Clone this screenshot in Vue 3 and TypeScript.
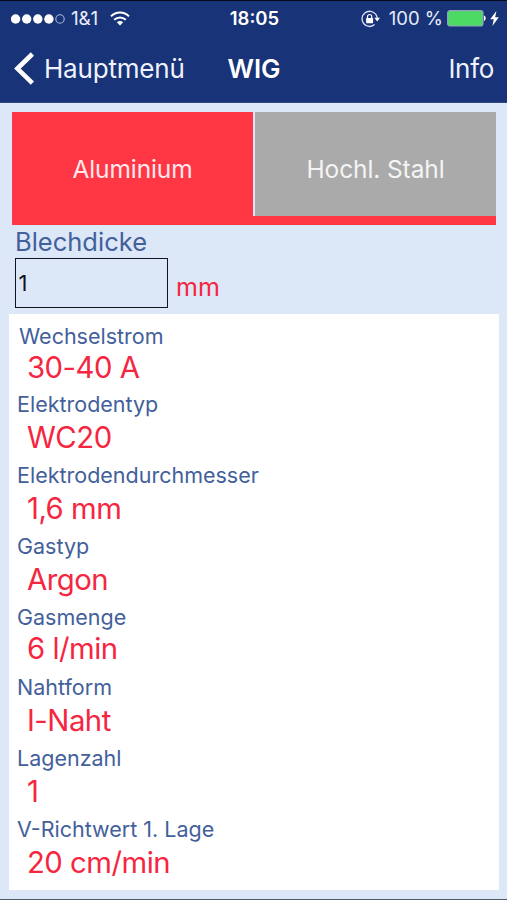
<script setup lang="ts">
import { ref } from 'vue'

interface Reading {
  label: string
  value: string
  compact?: boolean
}

const materials: string[] = ['Aluminium', 'Hochl. Stahl']
const selected = ref(0)
const thickness = ref('1')

const readings: Reading[] = [
  { label: 'Wechselstrom', value: '30-40 A', compact: true },
  { label: 'Elektrodentyp', value: 'WC20' },
  { label: 'Elektrodendurchmesser', value: '1,6 mm' },
  { label: 'Gastyp', value: 'Argon' },
  { label: 'Gasmenge', value: '6 l/min', compact: true },
  { label: 'Nahtform', value: 'I-Naht' },
  { label: 'Lagenzahl', value: '1' },
  { label: 'V-Richtwert 1. Lage', value: '20 cm/min' },
]
</script>

<template>
  <div class="screen">
    <header class="top">
      <div class="status">
        <div class="status-left">
          <svg class="signal" width="56" height="12" viewBox="0 0 56 12">
            <circle v-for="n in 4" :key="n" :cx="4.6 + (n - 1) * 11.1" cy="6" r="4.7" fill="#fff" />
            <circle cx="49" cy="6" r="4.2" fill="none" stroke="#a9b7dc" stroke-width="1.1" />
          </svg>
          <span class="carrier">1&amp;1</span>
          <svg class="wifi" width="20" height="16" viewBox="0 0 20 16" fill="none" stroke="#fff" stroke-width="2">
            <path d="M1 5.4C6 .3 14 .3 19 5.4" />
            <path d="M4.2 8.8C7.6 5.6 12.4 5.6 15.8 8.8" />
            <path d="M10 14.6L6.8 11.3C8.6 9.7 11.4 9.7 13.2 11.3Z" fill="#fff" stroke="none" />
          </svg>
        </div>
        <span class="clock">18:05</span>
        <div class="status-right">
          <svg class="lock" width="19" height="18" viewBox="0 0 19 18">
            <path d="M14.6 4.2A7.6 7.6 0 1 0 13.6 14.6" fill="none" stroke="#dfe6f8" stroke-width="1.3" />
            <path d="M14.6 4.2A7.6 7.6 0 0 1 16.2 8" fill="none" stroke="#dfe6f8" stroke-width="1.3" />
            <path d="M13.4 7.8H19L16.2 11.4Z" fill="#fff" />
            <rect x="5.1" y="8" width="7" height="5.2" rx=".6" fill="#fff" />
            <path d="M6.5 8.4V6.6A2.1 2.1 0 0 1 10.7 6.6V8.4" fill="none" stroke="#fff" stroke-width="1.2" />
          </svg>
          <span class="percent">100 %</span>
          <svg class="battery" width="39" height="17" viewBox="0 0 39 17">
            <rect x=".6" y=".6" width="35.4" height="15.4" rx="2.5" fill="#4cd964" stroke="#8fa5b9" stroke-width="1.2" />
            <path d="M37 5.6C39.2 6.2 39.2 10.4 37 11Z" fill="#fff" />
          </svg>
          <svg class="bolt" width="9" height="15" viewBox="0 0 9 15">
            <path d="M6.4 0L.2 8.2H3.8L2.4 15L8.8 6.2H5.2Z" fill="#fff" />
          </svg>
        </div>
      </div>
      <nav class="nav">
        <button class="back">
          <svg width="21" height="34" viewBox="0 0 21 34" fill="none" stroke="#fff" stroke-width="4.6">
            <path d="M18.4 2L3.4 16.6L18.4 31.2" />
          </svg>
          <span class="back-text">Hauptmenü</span>
        </button>
        <h1 class="title">WIG</h1>
        <button class="info">Info</button>
      </nav>
    </header>

    <div class="tabs">
      <button
        v-for="(name, i) in materials"
        :key="name"
        class="tab"
        :class="{ active: i === selected }"
        @click="selected = i"
      >
        {{ name }}
      </button>
    </div>

    <section class="form">
      <label class="form-label" for="thickness">Blechdicke</label>
      <div class="field">
        <input id="thickness" v-model="thickness" class="input" type="text" />
        <span class="unit">mm</span>
      </div>
    </section>

    <dl class="card">
      <div v-for="r in readings" :key="r.label" class="reading" :class="{ compact: r.compact }">
        <dt>{{ r.label }}</dt>
        <dd>{{ r.value }}</dd>
      </div>
    </dl>
  </div>
</template>

<style>
body {
  background: #dce7f7;
}
</style>

<style scoped>
.screen {
  box-sizing: border-box;
  width: 507px;
  height: 900px;
  overflow: hidden;
  display: flex;
  flex-direction: column;
  background: #dce7f7;
  border-bottom: 1px solid #4d5968;
  font-family: Inter, "Liberation Sans", sans-serif;
}
button {
  border: 0;
  margin: 0;
  padding: 0;
  background: none;
  font-family: inherit;
  color: inherit;
}
svg {
  display: block;
  flex: none;
}
.top {
  box-sizing: border-box;
  flex: none;
  height: 103px;
  background: #183377;
  border-top: 1px solid #050b1c;
  border-bottom: 1px solid #33477f;
  color: #fff;
}
.status {
  display: grid;
  grid-template-columns: 1fr auto 1fr;
  align-items: center;
  height: 34px;
  padding: 0 8px 0 11px;
  font-size: 18px;
  line-height: 35px;
  white-space: nowrap;
}
.status-left,
.status-right {
  display: flex;
  align-items: center;
}
.status-right {
  justify-content: flex-end;
}
.carrier {
  margin-left: 4px;
  width: 30px;
  font-size: 19px;
  letter-spacing: -0.2px;
  color: #e6ecfa;
}
.wifi {
  margin-left: 9px;
}
.clock {
  padding-right: 1px;
  font-size: 18.5px;
  font-weight: 600;
}
.percent {
  margin: 0 4px 0 9px;
  font-size: 18.5px;
  color: #e6ecfa;
}
.bolt {
  margin-left: 4px;
}
.nav {
  display: grid;
  grid-template-columns: 1fr auto 1fr;
  align-items: center;
  height: 67px;
  padding: 0 13px 0 14px;
  line-height: 67px;
}
.back {
  display: flex;
  align-items: center;
  gap: 9px;
  font-size: 26px;
}
.back-text {
  letter-spacing: -0.2px;
}
.back-text,
.info {
  color: #eef2fc;
}
.title {
  margin: 0;
  font-size: 26px;
  font-weight: 600;
}
.info {
  justify-self: end;
  font-size: 26px;
  letter-spacing: -0.3px;
}
.tabs {
  flex: none;
  display: flex;
  gap: 2px;
  height: 104px;
  margin: 9px 11px 0 12px;
  border-bottom: 9px solid #ff3745;
}
.tab {
  flex: 1;
  padding-top: 10px;
  background: #aaa;
  color: #f4f4f4;
  font-size: 24.5px;
  letter-spacing: -0.1px;
}
.tab.active {
  background: #ff3745;
  color: #ffe9ee;
}
.form {
  flex: none;
  height: 89px;
  padding-left: 15px;
}
.form-label {
  display: block;
  height: 33px;
  line-height: 33px;
  font-size: 25.5px;
  color: #43609b;
}
.field {
  display: flex;
  gap: 8px;
}
.input {
  box-sizing: border-box;
  width: 153px;
  height: 50px;
  padding: 0 2.5px;
  border: 1.5px solid #10151d;
  border-radius: 0;
  outline: 0;
  background: transparent;
  font: 22px/48px Inter, "Liberation Sans", sans-serif;
  color: #10151d;
}
.unit {
  font-size: 25px;
  line-height: 58px;
  color: #f52640;
}
.card {
  flex: none;
  box-sizing: border-box;
  display: grid;
  grid-template-rows: 68px repeat(3, 71px) 70px 71px 71px 1fr;
  width: 490px;
  height: 576px;
  margin: 0 0 0 9px;
  padding: 5px 0 0 8px;
  background: #fff;
}
.reading {
  white-space: nowrap;
}
.reading dt {
  height: 34px;
  font-size: 21.5px;
  line-height: 34px;
  color: #43609b;
}
.reading:first-child dt {
  padding-left: 2px;
}
.reading dd {
  margin: 0 0 0 10px;
  height: 36px;
  font-size: 29.3px;
  line-height: 34px;
  letter-spacing: -0.5px;
  color: #f52640;
}
.reading.compact dd {
  line-height: 30px;
}
</style>
